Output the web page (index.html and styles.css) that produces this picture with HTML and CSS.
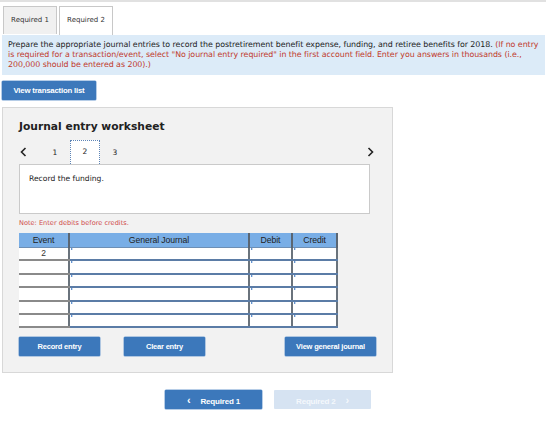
FILE: index.html
```html
<!DOCTYPE html>
<html>
<head>
<meta charset="utf-8">
<link rel="stylesheet" href="styles.css">
</head>
<body>
<div class="topbar"></div>
<div class="tabs">
  <div class="tab">Required 1</div>
  <div class="tab active">Required 2</div>
</div>
<div class="info">
  <p class="line">Prepare the appropriate journal entries to record the postretirement benefit expense, funding, and retiree benefits for 2018. <span class="red">(If no entry</span></p>
  <p class="line red">is required for a transaction/event, select "No journal entry required" in the first account field. Enter you answers in thousands (i.e.,</p>
  <p class="line red">200,000 should be entered as 200).)</p>
</div>
<div class="btn-row"><button class="btn btn-list">View transaction list</button></div>
<div class="panel">
  <h2 class="title">Journal entry worksheet</h2>
  <div class="pager">
    <span class="arrow">
      <svg width="7" height="10" viewBox="0 0 7 10"><path d="M5.5 1 L1.5 5 L5.5 9" fill="none" stroke="#222" stroke-width="1.6"/></svg>
    </span>
    <span class="pg first">1</span>
    <span class="pg current">2</span>
    <span class="pg">3</span>
    <span class="spacer"></span>
    <span class="arrow right">
      <svg width="7" height="10" viewBox="0 0 7 10"><path d="M1.5 1 L5.5 5 L1.5 9" fill="none" stroke="#222" stroke-width="1.6"/></svg>
    </span>
  </div>
  <div class="desc">Record the funding.</div>
  <div class="note">Note: Enter debits before credits.</div>
  <table class="jt">
    <thead>
      <tr><th class="c-ev">Event</th><th class="c-gj">General Journal</th><th class="c-db">Debit</th><th class="c-cr">Credit</th></tr>
    </thead>
    <tbody>
      <tr><td class="ev">2</td><td class="in"></td><td class="in"></td><td class="in"></td></tr>
      <tr><td class="ev"></td><td class="in"></td><td class="in"></td><td class="in"></td></tr>
      <tr><td class="ev"></td><td class="in"></td><td class="in"></td><td class="in"></td></tr>
      <tr><td class="ev"></td><td class="in"></td><td class="in"></td><td class="in"></td></tr>
      <tr><td class="ev"></td><td class="in"></td><td class="in"></td><td class="in"></td></tr>
      <tr><td class="ev"></td><td class="in"></td><td class="in"></td><td class="in"></td></tr>
    </tbody>
  </table>
  <div class="actions">
    <button class="btn btn-rec">Record entry</button>
    <button class="btn btn-clear">Clear entry</button>
    <span class="spacer"></span>
    <button class="btn btn-view">View general journal</button>
  </div>
</div>
<div class="bottom-nav">
  <button class="btn nav-btn"><span class="chev">&#8249;</span>Required 1</button>
  <button class="btn nav-btn disabled">Required 2<span class="chev r">&#8250;</span></button>
</div>
</body>
</html>
```
FILE: styles.css
```css
* { box-sizing: border-box; }
body {
  margin: 0;
  width: 560px;
  height: 425px;
  background: #fff;
  font-family: "DejaVu Sans", Verdana, sans-serif;
  color: #222;
  overflow: hidden;
}
.topbar {
  height: 2px;
  width: 546px;
  background: #e1e1e1;
}
.tabs {
  display: flex;
  gap: 2px;
  margin: 4px 0 0 3px;
  height: 29px;
}
.tab {
  width: 54px;
  height: 28px;
  border: 1px solid #c8c8c8;
  border-bottom: none;
  background: #f0f0f0;
  font-size: 7px;
  line-height: 27px;
  text-align: center;
  color: #333;
}
.tab.active {
  background: #fff;
  height: 29px;
}
.info {
  margin: 0 0 0 2px;
  width: 543px;
  height: 40px;
  background: #dcebf8;
  padding: 5px 6px 0 6px;
  font-size: 7.9px;
  line-height: 10px;
  color: #222;
  white-space: nowrap;
  overflow: hidden;
  letter-spacing: -0.05px;
}
.line { margin: 0; height: 10px; }
.red { color: #c0392b; }
.btn-row { display: flex; margin: 6px 0 0 2px; height: 19px; }
.btn {
  border: none;
  background: #3c78bb;
  color: #fff;
  font-family: "Liberation Sans", Arial, sans-serif;
  font-weight: bold;
  font-size: 7.5px;
  letter-spacing: -0.2px;
  height: 19px;
  padding: 0;
  border-radius: 1px;
  box-shadow: 0 0 0 0.5px #6e9bd0;
  cursor: pointer;
}
.btn-list { width: 94px; font-size: 7.8px; }
.panel {
  margin: 7px 0 0 2px;
  width: 391px;
  height: 266px;
  background: #f2f2f2;
  border: 1px solid #d8d8d8;
  padding: 0 0 0 16px;
}
.title {
  margin: 12px 0 0 0;
  font-size: 10.7px;
  font-weight: bold;
  line-height: 14px;
  color: #222;
}
.pager {
  display: flex;
  align-items: center;
  margin-top: 6px;
  height: 24px;
  width: 355px;
  font-size: 7.5px;
}
.arrow { display: flex; align-items: center; margin-left: 1px; width: 7px; }
.arrow.right { margin-left: 0; }
.pg { width: 30px; text-align: center; }
.pg.first { margin-left: 13px; }
.pg.current {
  width: 30px;
  height: 24px;
  line-height: 22px;
  background: #fff;
  border: 1px dotted #5d84b6;
  border-bottom: none;
}
.spacer { flex: 1; }
.desc {
  width: 351px;
  height: 50px;
  background: #fff;
  border: 1px solid #cacaca;
  font-size: 7.6px;
  padding: 9px 0 0 9px;
}
.note {
  margin-top: 5px;
  font-size: 6.6px;
  color: #d04a4a;
  height: 8px;
  line-height: 8px;
}
.jt {
  margin-top: 6px;
  border-collapse: collapse;
  width: 318px;
  table-layout: fixed;
  font-family: "Liberation Sans", Arial, sans-serif;
}
.jt th {
  background: #79aee6;
  height: 14px;
  font-weight: normal;
  font-size: 8.7px;
  color: #222;
  padding: 0;
  border-bottom: 1px solid #6d8fb5;
  border-left: 2px solid #5a6673;
  letter-spacing: -0.1px;
}
.jt th:first-child { border-left: none; }
.jt th:last-child { border-right: 2px solid #5a6673; }
.c-ev { width: 50px; }
.c-gj { width: 180px; }
.c-db { width: 43px; }
.c-cr { width: 45px; }
.jt td {
  height: 13.4px;
  padding: 0;
  background: #fff;
}
.jt td.ev {
  text-align: center;
  font-size: 8.5px;
  color: #333;
  border-bottom: 2px solid #8a8a8a;
  line-height: 10px;
}
.jt td.in {
  border-left: 2px solid #6a737c;
  border-bottom: 2px solid #5b7ca6;
  position: relative;
}
.jt td.in:last-child { border-right: 2px solid #6a737c; }
.jt tbody tr:first-child td.in { border-top: 1px solid #5b7ca6; }
.jt td.in::before {
  content: "";
  position: absolute;
  left: 1px;
  top: 0;
  border-top: 1.5px solid transparent;
  border-bottom: 1.5px solid transparent;
  border-left: 2.5px solid #2f6fc0;
}
.actions {
  display: flex;
  margin-top: 9px;
  width: 357px;
}
.btn-rec { width: 81px; }
.btn-clear { width: 81px; margin-left: 24px; }
.btn-view { width: 91px; }
.bottom-nav {
  display: flex;
  gap: 12px;
  margin: 17px 0 0 165px;
}
.nav-btn { width: 97px; font-size: 8px; }
.nav-btn.disabled { background: #d6e3f2; color: #f4f8fc; box-shadow: none; }
.chev { font-size: 11px; margin-right: 10px; position: relative; top: 0.5px; }
.chev.r { margin-left: 10px; margin-right: 0; }
```
